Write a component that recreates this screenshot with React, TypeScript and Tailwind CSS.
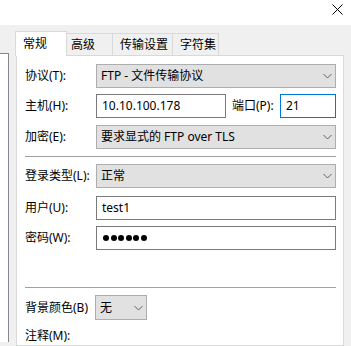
import React from "react";

const font = { fontFamily: '"Noto Sans", "Noto Sans CJK SC", sans-serif' };

function Chevron() {
  return (
    <svg width="9" height="6" viewBox="0 0 9 6" className="shrink-0">
      <path d="M0.5 1 L4.5 5 L8.5 1" fill="none" stroke="#606060" strokeWidth="1" />
    </svg>
  );
}

function Select({ value, className = "" }: { value: string; className?: string }) {
  return (
    <div
      className={`h-[24px] flex items-center justify-between border border-[#adadad] bg-[#e1e1e1] pl-[4px] pr-[3px] ${className}`}
    >
      <span className="text-[12px] text-black leading-none">{value}</span>
      <Chevron />
    </div>
  );
}

function Input({
  value,
  className = "",
  focused = false,
  children,
}: {
  value?: string;
  className?: string;
  focused?: boolean;
  children?: React.ReactNode;
}) {
  return (
    <div
      className={`h-[24px] flex items-center border bg-white pl-[5px] ${focused ? "border-[#0078d7]" : "border-[#7a7a7a]"} ${className}`}
    >
      {children ?? <span className="text-[12px] text-black leading-none">{value}</span>}
    </div>
  );
}

function Label({ children, w = "w-[71px]" }: { children: React.ReactNode; w?: string }) {
  return <div className={`${w} shrink-0 text-[12px] text-black leading-none`}>{children}</div>;
}

export default function App() {
  return (
    <div className="w-[351px] h-[346px] overflow-hidden bg-[#f0f0f0] flex flex-col" style={font}>
      <div className="h-[25px] bg-white flex items-start justify-end pr-[8px] pt-[4px] shrink-0">
        <svg width="11" height="11" viewBox="0 0 11 11">
          <path d="M0.5 0.5 L10.5 10.5 M10.5 0.5 L0.5 10.5" stroke="#000" strokeWidth="1" />
        </svg>
      </div>
      <div className="flex flex-1">
        <div className="w-[9px] mt-[28px] h-[289px] bg-white border-t border-r border-[#828790] shrink-0" />
        <div className="ml-[7px] w-[328px] mt-[6px] flex flex-col">
          <div className="flex items-end h-[24px] relative z-10">
            <div className="-ml-[1px] w-[52px] h-[25px] -mb-[1px] bg-white border border-b-0 border-[#d9d9d9] flex items-center pl-[7px] text-[12px] text-black leading-none">
              常规
            </div>
            <div className="w-[46px] h-[22px] bg-[#f0f0f0] border border-l-0 border-b-0 border-[#d9d9d9] flex items-center pl-[4px] text-[12px] text-black leading-none">
              高级
            </div>
            <div className="w-[60px] h-[22px] bg-[#f0f0f0] border border-l-0 border-b-0 border-[#d9d9d9] flex items-center pl-[7px] text-[12px] text-black leading-none">
              传输设置
            </div>
            <div className="w-[46px] h-[22px] bg-[#f0f0f0] border border-l-0 border-b-0 border-[#d9d9d9] flex items-center pl-[7px] text-[12px] text-black leading-none">
              字符集
            </div>
          </div>
          <div className="flex-1 bg-white border border-[#d9d9d9] pt-[8px] pl-[8px] pr-[7px]">
            <div className="flex items-center">
              <Label>协议(T):</Label>
              <Select value="FTP - 文件传输协议" className="flex-1" />
            </div>
            <div className="flex items-center mt-[6px]">
              <Label>主机(H):</Label>
              <Input value="10.10.100.178" className="w-[130px]" />
              <Label w="w-[54px] pl-[6px]">端口(P):</Label>
              <Input value="21" className="flex-1" focused />
            </div>
            <div className="flex items-center mt-[7px]">
              <Label>加密(E):</Label>
              <Select value="要求显式的 FTP over TLS" className="flex-1" />
            </div>
            <div className="h-px bg-[#a0a0a0] mt-[7px]" />
            <div className="flex items-center mt-[7px]">
              <Label>登录类型(L):</Label>
              <Select value="正常" className="flex-1" />
            </div>
            <div className="flex items-center mt-[8px]">
              <Label>用户(U):</Label>
              <Input value="test1" className="flex-1" />
            </div>
            <div className="flex items-center mt-[6px]">
              <Label>密码(W):</Label>
              <Input className="flex-1">
                <div className="flex gap-[1.5px] pl-px">
                  {[0, 1, 2, 3, 4, 5].map((i) => (
                    <span key={i} className="block w-[6px] h-[6px] rounded-full bg-black" />
                  ))}
                </div>
              </Input>
            </div>
            <div className="h-px bg-[#a0a0a0] mt-[37px]" />
            <div className="flex items-center mt-[7px]">
              <Label w="w-[70px]">背景颜色(B)</Label>
              <Select value="无" className="w-[52px] h-[25px]" />
            </div>
            <div className="mt-[10px] text-[12px] text-black leading-none">注释(M):</div>
          </div>
        </div>
      </div>
    </div>
  );
}
